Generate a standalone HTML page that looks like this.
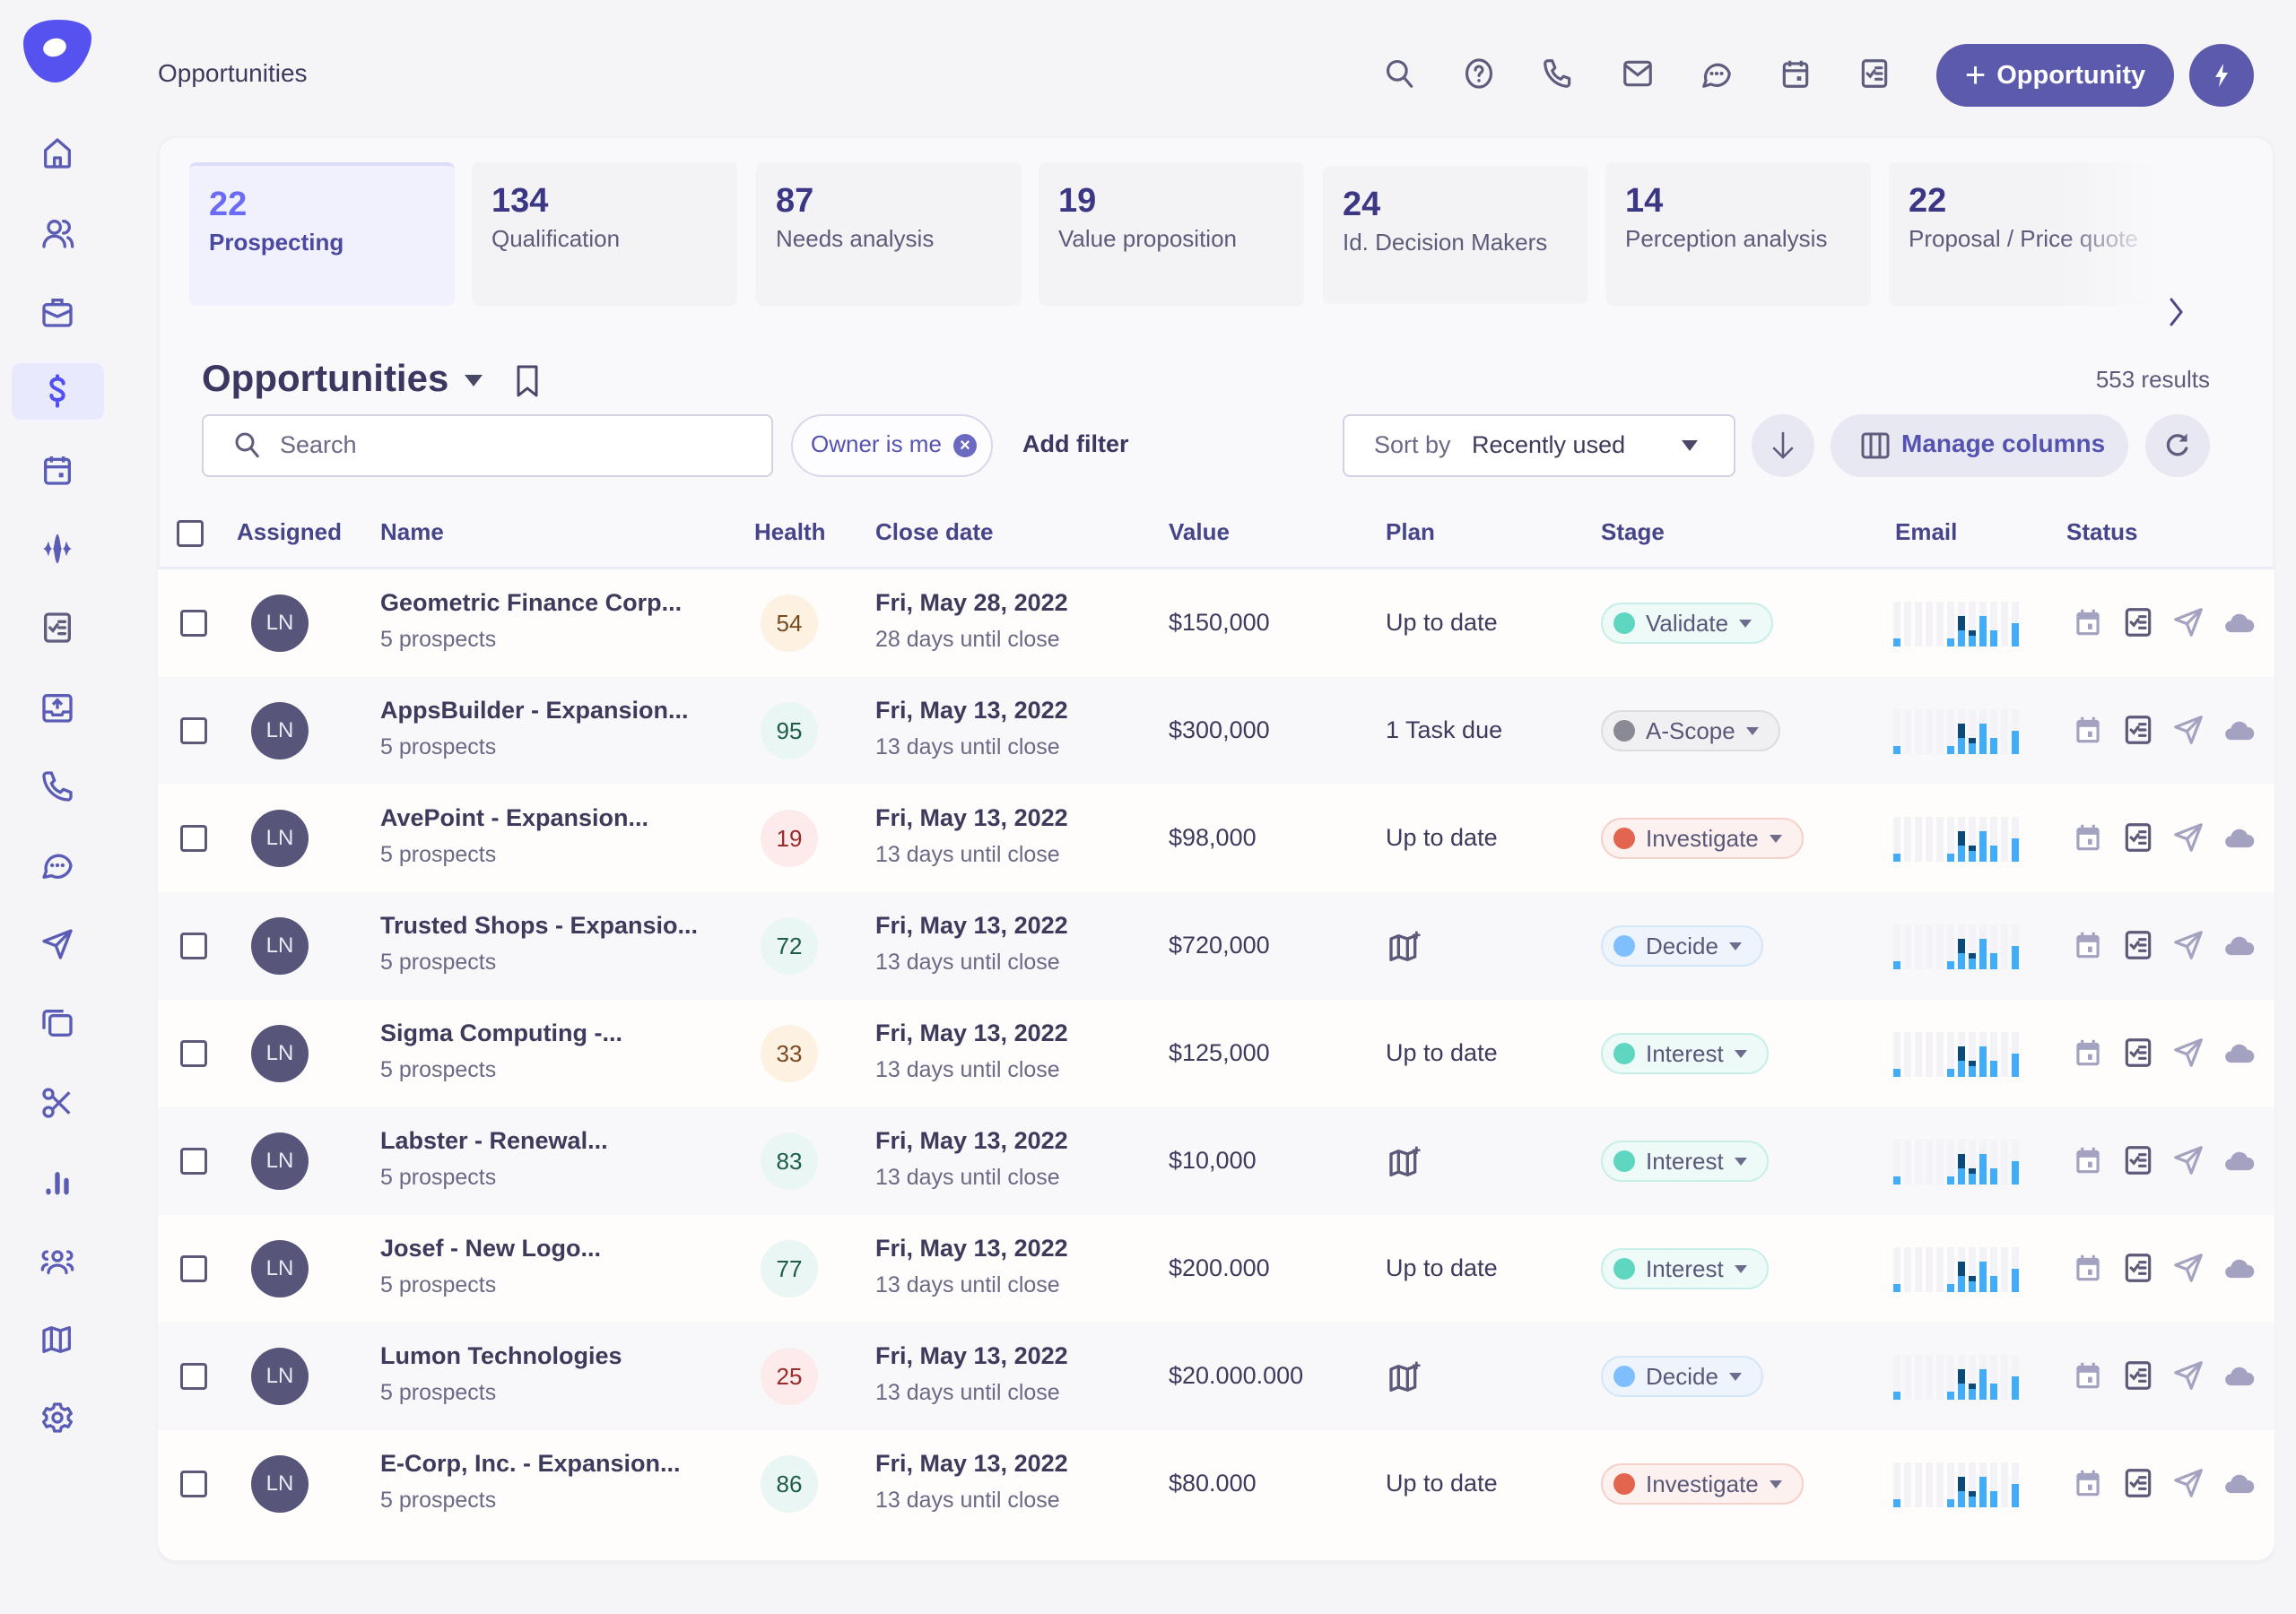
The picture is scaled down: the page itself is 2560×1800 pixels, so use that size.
<!DOCTYPE html>
<html><head><meta charset="utf-8">
<style>
*{box-sizing:border-box;margin:0;padding:0}
body{width:2560px;height:1800px;background:#f5f5f8;font-family:"Liberation Sans",sans-serif;color:#3d3a5c;position:relative;overflow:hidden}
.a{position:absolute}
.sb{position:absolute;left:44px;width:40px;height:40px}
.ti{position:absolute;top:63px;width:38px;height:38px}
.card{position:absolute;top:181px;width:296px;height:160px;background:#f3f3f6;border-radius:8px}
.card .n{position:absolute;left:22px;top:22px;font-size:38px;color:#3b3784;font-weight:600}
.card .l{position:absolute;left:22px;top:70px;font-size:26px;color:#5d5b7a}
.th{position:absolute;top:578px;font-size:26px;color:#47458a;font-weight:600}
.row{position:absolute;left:176px;width:2360px;height:120px}
.row .cb{position:absolute;left:25px;top:45px;width:30px;height:30px;border:3px solid #5c5a78;border-radius:4px;background:#fff}
.row .av{position:absolute;left:104px;top:28px;width:64px;height:64px;border-radius:50%;background:#57557a;color:#e8e8f2;font-size:24px;text-align:center;line-height:64px}
.row .t1{position:absolute;left:248px;top:22px;font-size:27px;font-weight:600;color:#3d3a5c}
.row .t2{position:absolute;left:248px;top:64px;font-size:25px;color:#6b6985}
.row .h{position:absolute;left:672px;top:28px;width:64px;height:64px;border-radius:50%;text-align:center;line-height:64px;font-size:26px}
.row .d1{position:absolute;left:800px;top:22px;font-size:27px;font-weight:600}
.row .d2{position:absolute;left:800px;top:64px;font-size:25px;color:#6b6985}
.row .v{position:absolute;left:1127px;top:44px;font-size:27px}
.row .p{position:absolute;left:1369px;top:44px;font-size:27px}
.row .pm{position:absolute;left:1370px;top:42px;width:40px;height:40px}
.pill{position:absolute;left:1609px;top:37px;height:46px;border-radius:23px;border:2px solid;display:flex;align-items:center;padding:0 22px 0 12px;font-size:26px;color:#5a5878}
.pill i{display:inline-block;width:24px;height:24px;border-radius:50%;margin-right:12px}
.pill b{display:inline-block;margin-left:12px;width:0;height:0;border-left:7px solid transparent;border-right:7px solid transparent;border-top:9px solid #6e6c8c}
.em{position:absolute;left:1935px;top:36px;width:145px;height:50px}
.st{position:absolute;top:40px;width:38px;height:38px}
.g{background:#e9f6f3;color:#1f5b4b}.o{background:#fdf1e1;color:#7a4a1f}.r{background:#fdeaea;color:#9a2b2b}
.pv{background:#eefaf8;border-color:#c7eee7}.pv i{background:#5ed6c0}
.pa{background:#f0f0f3;border-color:#dcdce1}.pa i{background:#8a8a95}
.pi{background:#fdf1ef;border-color:#f6d0c8}.pi i{background:#e4654f}
.pd{background:#eef4fc;border-color:#d3e6f8}.pd i{background:#80bfff}
</style></head><body>
<svg width="0" height="0" style="position:absolute">
<defs>
<symbol id="cal" viewBox="0 0 24 24"><rect x="4" y="5" width="16" height="16" rx="2" fill="none" stroke="currentColor" stroke-width="2"/><path d="M4 10h16M8 3v4M16 3v4" stroke="currentColor" stroke-width="2" fill="none"/><rect x="13" y="14" width="3" height="3" fill="currentColor"/></symbol>
<symbol id="calf" viewBox="0 0 24 24"><rect x="4" y="5" width="16" height="16" rx="2" fill="currentColor"/><path d="M8 3v4M16 3v4" stroke="currentColor" stroke-width="2"/><rect x="6" y="10" width="12" height="9" fill="#fff"/><rect x="12" y="13" width="3" height="4" fill="currentColor"/></symbol>
<symbol id="chk" viewBox="0 0 24 24"><rect x="4" y="3" width="16" height="18" rx="2" fill="none" stroke="currentColor" stroke-width="2"/><path d="M7 12l2 2 3-4M13 8h4M13 12h4M13 16h4" stroke="currentColor" stroke-width="2" fill="none" stroke-linecap="round"/></symbol>
<symbol id="send" viewBox="0 0 24 24"><path d="M21 3L3 10l8 3 3 8z M21 3L11 13" fill="none" stroke="currentColor" stroke-width="2" stroke-linejoin="round"/></symbol>
<symbol id="cloud" viewBox="0 0 24 24"><path d="M6 19a4 4 0 010-8 6 6 0 0111.5-1A4.5 4.5 0 0118 19z" fill="currentColor"/></symbol>
<symbol id="map" viewBox="0 0 24 24"><path d="M3 6l5-2 6 2 5-2v14l-5 2-6-2-5 2z M8 4v14 M14 6v14" fill="none" stroke="currentColor" stroke-width="2" stroke-linejoin="round"/><path d="M20 1v5M17.5 3.5h5" stroke="currentColor" stroke-width="1.6"/></symbol>
<symbol id="chart" viewBox="0 0 145 50">
<g fill="#f3f3f7"><rect x="0" y="0" width="8" height="50"/><rect x="12" y="0" width="8" height="50"/><rect x="24" y="0" width="8" height="50"/><rect x="36" y="0" width="8" height="50"/><rect x="48" y="0" width="8" height="50"/><rect x="60" y="0" width="8" height="50"/><rect x="72" y="0" width="8" height="50"/><rect x="84" y="0" width="8" height="50"/><rect x="96" y="0" width="8" height="50"/><rect x="108" y="0" width="8" height="50"/><rect x="120" y="0" width="8" height="50"/><rect x="132" y="0" width="8" height="50"/></g>
<g fill="#41acf7"><rect x="0" y="41" width="8" height="9"/><rect x="60" y="41" width="8" height="9"/><rect x="72" y="32" width="8" height="18"/><rect x="84" y="38" width="8" height="12"/><rect x="96" y="16" width="8" height="34"/><rect x="108" y="32" width="8" height="18"/><rect x="132" y="24" width="8" height="26"/></g>
<g fill="#0c4a7a"><rect x="72" y="16" width="8" height="16"/><rect x="84" y="32" width="8" height="6"/></g>
</symbol>
</defs></svg>

<!-- logo -->
<svg class="a" style="left:24px;top:20px" width="80" height="74" viewBox="0 0 80 74"><path d="M40 2C62 2 78 8 78 22c0 22-22 50-40 50C18 72 2 50 2 28 2 12 18 2 40 2z" fill="#5552f0"/><ellipse cx="37" cy="33" rx="13" ry="10" fill="#fff" transform="rotate(-15 37 33)"/></svg>

<!-- sidebar -->
<div class="a" style="left:11px;top:403px;width:107px;height:67px;border-radius:12px;background:#e9e9fd;border:2px solid #f4f4ff"></div>
<svg class="sb" style="top:151px;color:#5b5cb5" viewBox="0 0 24 24"><path d="M4 10l8-7 8 7v10a1 1 0 01-1 1H5a1 1 0 01-1-1z M10 21v-6h4v6" fill="none" stroke="currentColor" stroke-width="2" stroke-linejoin="round"/></svg>
<svg class="sb" style="top:240px;color:#5b5cb5" viewBox="0 0 24 24"><circle cx="10" cy="8" r="4" fill="none" stroke="currentColor" stroke-width="2"/><path d="M3 21c0-4 3-7 7-7s7 3 7 7M16 4a4 4 0 010 8M19 15c2 1 3 3 3 6" fill="none" stroke="currentColor" stroke-width="2" stroke-linecap="round"/></svg>
<svg class="sb" style="top:328px;color:#5b5cb5" viewBox="0 0 24 24"><rect x="3" y="7" width="18" height="14" rx="2" fill="none" stroke="currentColor" stroke-width="2"/><path d="M9 7V4h6v3M3 11l9 4 9-4" fill="none" stroke="currentColor" stroke-width="2"/></svg>
<svg class="sb" style="top:416px;color:#5050f5" viewBox="0 0 24 24"><path d="M16 7c0-2-2-3-4-3s-4 1-4 3 2 3 4 4 4 2 4 4-2 3-4 3-4-1-4-3M12 2v2M12 20v2" fill="none" stroke="currentColor" stroke-width="2.4" stroke-linecap="round"/></svg>
<svg class="sb" style="top:504px;color:#5b5cb5"><use href="#cal"/></svg>
<svg class="sb" style="top:592px;color:#5b5cb5" viewBox="0 0 24 24"><path d="M2 12c2 0 3-2 4-5 1 3 1 5 3 5 1 0 1-8 3-10 2 2 2 10 3 10 2 0 2-2 3-5 1 3 2 5 4 5-2 0-3 2-4 5-1-3-1-5-3-5-1 0-1 8-3 10-2-2-2-10-3-10-2 0-2 2-3 5-1-3-2-5-4-5z" fill="currentColor"/></svg>
<svg class="sb" style="top:680px;color:#5f5d7e"><use href="#chk"/></svg>
<svg class="sb" style="top:769px;color:#5b5cb5" viewBox="0 0 24 24"><rect x="3" y="4" width="18" height="17" rx="2" fill="none" stroke="currentColor" stroke-width="2"/><path d="M3 15h5l1 2h6l1-2h5M12 13V7M9 10l3-3 3 3" fill="none" stroke="currentColor" stroke-width="2"/></svg>
<svg class="sb" style="top:857px;color:#5b5cb5" viewBox="0 0 24 24"><path d="M5 3h3l2 5-2 2a11 11 0 006 6l2-2 5 2v3a2 2 0 01-2 2A17 17 0 013 5a2 2 0 012-2" fill="none" stroke="currentColor" stroke-width="2" stroke-linejoin="round"/></svg>
<svg class="sb" style="top:945px;color:#5b5cb5" viewBox="0 0 24 24"><path d="M3 20l1.5-4A8 8 0 1121 12a9 9 0 01-13 7z" fill="none" stroke="currentColor" stroke-width="2" stroke-linejoin="round"/><circle cx="8.5" cy="12" r="1.3" fill="currentColor"/><circle cx="12" cy="12" r="1.3" fill="currentColor"/><circle cx="15.5" cy="12" r="1.3" fill="currentColor"/></svg>
<svg class="sb" style="top:1033px;color:#5b5cb5"><use href="#send"/></svg>
<svg class="sb" style="top:1121px;color:#5b5cb5" viewBox="0 0 24 24"><rect x="7" y="7" width="14" height="13" rx="2" fill="none" stroke="currentColor" stroke-width="2"/><path d="M3 16V6a2 2 0 012-2h11" fill="none" stroke="currentColor" stroke-width="2"/></svg>
<svg class="sb" style="top:1210px;color:#5b5cb5" viewBox="0 0 24 24"><circle cx="6" cy="6" r="3" fill="none" stroke="currentColor" stroke-width="2"/><circle cx="6" cy="18" r="3" fill="none" stroke="currentColor" stroke-width="2"/><path d="M8.5 7.5L20 19M8.5 16.5L20 5" stroke="currentColor" stroke-width="2"/></svg>
<svg class="sb" style="top:1298px;color:#5b5cb5" viewBox="0 0 24 24"><path d="M6 19v-1M12 19V7M18 19v-8" stroke="currentColor" stroke-width="3.2" stroke-linecap="round"/></svg>
<svg class="sb" style="top:1386px;color:#5b5cb5" viewBox="0 0 24 24"><circle cx="12" cy="9" r="3" fill="none" stroke="currentColor" stroke-width="2"/><path d="M6 20c0-3 3-5 6-5s6 2 6 5M5 6a2.5 2.5 0 000 5M19 6a2.5 2.5 0 010 5M2 18c0-2 1-3 3-3.5M22 18c0-2-1-3-3-3.5" fill="none" stroke="currentColor" stroke-width="2" stroke-linecap="round"/></svg>
<svg class="sb" style="top:1474px;color:#5b5cb5" viewBox="0 0 24 24"><path d="M3 6l5-2 6 2 6-2v14l-6 2-6-2-5 2z M8 4v14 M14 6v14" fill="none" stroke="currentColor" stroke-width="2" stroke-linejoin="round"/></svg>
<svg class="sb" style="top:1561px;color:#5b5cb5" viewBox="0 0 24 24"><circle cx="12" cy="12" r="3" fill="none" stroke="currentColor" stroke-width="2"/><path d="M10 3h4l.6 2.5 2.2 1.2 2.4-.9 2 3.4-1.9 1.7v2.2l1.9 1.7-2 3.4-2.4-.9-2.2 1.2L14 21h-4l-.6-2.5-2.2-1.2-2.4.9-2-3.4 1.9-1.7v-2.2L2.8 9.2l2-3.4 2.4.9 2.2-1.2z" fill="none" stroke="currentColor" stroke-width="2" stroke-linejoin="round"/></svg>

<!-- top bar -->
<div class="a" style="left:176px;top:66px;font-size:28px;color:#3d3a5c">Opportunities</div>
<svg class="ti" style="left:1542px;color:#5f5d7e" viewBox="0 0 24 24"><circle cx="10" cy="10" r="6.5" fill="none" stroke="currentColor" stroke-width="2"/><path d="M15 15l5 6" stroke="currentColor" stroke-width="2" stroke-linecap="round"/></svg>
<svg class="ti" style="left:1630px;color:#5f5d7e" viewBox="0 0 24 24"><ellipse cx="12" cy="12" rx="8.5" ry="9.5" fill="none" stroke="currentColor" stroke-width="2"/><path d="M9.5 9.5a2.5 2.5 0 115 0c0 2-2.5 2-2.5 4" fill="none" stroke="currentColor" stroke-width="2" stroke-linecap="round"/><circle cx="12" cy="17" r="1.1" fill="currentColor"/></svg>
<svg class="ti" style="left:1718px;color:#5f5d7e" viewBox="0 0 24 24"><path d="M5 3h3l2 5-2 2a11 11 0 006 6l2-2 4 1.5v3.5a2 2 0 01-2 2A17 17 0 013 5a2 2 0 012-2" fill="none" stroke="currentColor" stroke-width="2" stroke-linejoin="round"/></svg>
<svg class="ti" style="left:1807px;color:#5f5d7e" viewBox="0 0 24 24"><rect x="3" y="4" width="18" height="16" rx="2" fill="none" stroke="currentColor" stroke-width="2"/><path d="M3 6l9 7 9-7" fill="none" stroke="currentColor" stroke-width="2"/></svg>
<svg class="ti" style="left:1895px;color:#5f5d7e" viewBox="0 0 24 24"><path d="M3 21l1.5-4A8.5 8.5 0 1121 12a9 9 0 01-13 7.5z" fill="none" stroke="currentColor" stroke-width="2" stroke-linejoin="round"/><circle cx="8.5" cy="12" r="1.3" fill="currentColor"/><circle cx="12" cy="12" r="1.3" fill="currentColor"/><circle cx="15.5" cy="12" r="1.3" fill="currentColor"/></svg>
<svg class="ti" style="left:1983px;color:#5f5d7e"><use href="#cal"/></svg>
<svg class="ti" style="left:2071px;color:#5f5d7e"><use href="#chk"/></svg>
<div class="a" style="left:2159px;top:49px;width:265px;height:70px;border-radius:35px;background:#5b5aad;color:#fff;font-size:29px;font-weight:600;display:flex;align-items:center;justify-content:center"><span style="font-size:40px;font-weight:300;margin-right:12px;line-height:1">+</span>Opportunity</div>
<div class="a" style="left:2441px;top:49px;width:72px;height:70px;border-radius:50%;background:#5b5aad"><svg style="position:absolute;left:24px;top:21px" width="24" height="28" viewBox="0 0 24 28"><path d="M14 1L5 16h6l-2 11 10-16h-6z" fill="#fff"/></svg></div>

<!-- main card -->
<div class="a" style="left:176px;top:152px;width:2360px;height:1590px;background:#f9f9fc;border-radius:20px;border:2px solid #efeff4;box-shadow:0 2px 4px rgba(0,0,0,.04)"></div>

<div class="card" style="left:211px;background:#f1f1fd;border-top:4px solid #dcdcfb"><div class="n" style="color:#6a6cf5">22</div><div class="l" style="color:#4a48a0;font-weight:600">Prospecting</div></div>
<div class="card" style="left:526px"><div class="n">134</div><div class="l">Qualification</div></div>
<div class="card" style="left:843px"><div class="n">87</div><div class="l">Needs analysis</div></div>
<div class="card" style="left:1158px"><div class="n">19</div><div class="l">Value proposition</div></div>
<div class="card" style="left:1475px;top:185px;height:154px"><div class="n">24</div><div class="l">Id. Decision Makers</div></div>
<div class="card" style="left:1790px"><div class="n">14</div><div class="l">Perception analysis</div></div>
<div class="card" style="left:2106px;width:420px;overflow:hidden"><div class="n">22</div><div class="l" style="white-space:nowrap">Proposal / Price quote</div><div style="position:absolute;left:190px;top:0;width:240px;height:160px;background:linear-gradient(90deg,rgba(249,249,252,0),#f9f9fc 45%)"></div></div>
<svg class="a" style="left:2416px;top:330px" width="22" height="36" viewBox="0 0 22 36"><path d="M5 4l11 14L5 32" fill="none" stroke="#4a4880" stroke-width="3" stroke-linecap="round"/></svg>

<div class="a" style="left:225px;top:398px;font-size:42px;font-weight:600;color:#3a3760">Opportunities</div>
<div class="a" style="left:518px;top:418px;border-left:10px solid transparent;border-right:10px solid transparent;border-top:13px solid #4a4868"></div>
<svg class="a" style="left:573px;top:406px" width="30" height="38" viewBox="0 0 30 38"><path d="M5 3h20v32l-10-8-10 8z" fill="none" stroke="#4a4868" stroke-width="3" stroke-linejoin="round"/></svg>
<div class="a" style="left:2320px;top:408px;width:144px;text-align:right;font-size:26px;color:#5d5b7a">553 results</div>

<div class="a" style="left:225px;top:462px;width:637px;height:70px;border:2px solid #d3d2e4;border-radius:8px;background:#fff"></div>
<svg class="a" style="left:258px;top:478px" width="36" height="36" viewBox="0 0 24 24"><circle cx="10" cy="10" r="6" fill="none" stroke="#5f5d7e" stroke-width="2"/><path d="M14.5 14.5l5 6" stroke="#5f5d7e" stroke-width="2" stroke-linecap="round"/></svg>
<div class="a" style="left:312px;top:481px;font-size:27px;color:#6b6985">Search</div>
<div class="a" style="left:882px;top:462px;width:225px;height:70px;border:2px solid #d8d8ea;border-radius:35px;background:#fdfdff"></div>
<div class="a" style="left:904px;top:480px;font-size:26px;color:#5553b0">Owner is me</div>
<div class="a" style="left:1063px;top:484px;width:26px;height:26px;border-radius:50%;background:#6b69c0;color:#fff;font-size:20px;line-height:26px;text-align:center;font-weight:700">×</div>
<div class="a" style="left:1140px;top:480px;font-size:27px;font-weight:600;color:#3a3760">Add filter</div>

<div class="a" style="left:1497px;top:462px;width:438px;height:70px;border:2px solid #d3d2e4;border-radius:8px;background:#fff"></div>
<div class="a" style="left:1532px;top:481px;font-size:27px;color:#6b6985">Sort by</div>
<div class="a" style="left:1641px;top:481px;font-size:27px;color:#3d3a5c">Recently used</div>
<div class="a" style="left:1875px;top:491px;border-left:9px solid transparent;border-right:9px solid transparent;border-top:12px solid #4a4868"></div>
<div class="a" style="left:1953px;top:462px;width:70px;height:70px;border-radius:50%;background:#e7e8f2"></div>
<svg class="a" style="left:1973px;top:480px" width="30" height="34" viewBox="0 0 30 34"><path d="M15 3v27M5 20l10 10 10-10" fill="none" stroke="#5f5d7e" stroke-width="2.6" stroke-linecap="round"/></svg>
<div class="a" style="left:2041px;top:462px;width:332px;height:70px;border-radius:35px;background:#e7e8f2"></div>
<svg class="a" style="left:2075px;top:482px" width="32" height="30" viewBox="0 0 32 30"><rect x="2" y="2" width="28" height="26" rx="3" fill="none" stroke="#5f5d7e" stroke-width="3"/><path d="M11 2v26M21 2v26" stroke="#5f5d7e" stroke-width="3"/></svg>
<div class="a" style="left:2120px;top:479px;font-size:28px;font-weight:600;color:#5553b0">Manage columns</div>
<div class="a" style="left:2392px;top:462px;width:72px;height:70px;border-radius:50%;background:#e7e8f2"></div>
<svg class="a" style="left:2410px;top:479px" width="36" height="36" viewBox="0 0 24 24"><path d="M18 8a7 7 0 10.5 6" fill="none" stroke="#5f5d7e" stroke-width="2.2" stroke-linecap="round"/><path d="M19 3v6h-6z" fill="#5f5d7e"/></svg>

<!-- header -->
<div class="a" style="left:197px;top:580px;width:30px;height:30px;border:3px solid #5c5a78;border-radius:4px;background:#fff"></div>
<div class="th" style="left:264px">Assigned</div>
<div class="th" style="left:424px">Name</div>
<div class="th" style="left:841px">Health</div>
<div class="th" style="left:976px">Close date</div>
<div class="th" style="left:1303px">Value</div>
<div class="th" style="left:1545px">Plan</div>
<div class="th" style="left:1785px">Stage</div>
<div class="th" style="left:2113px">Email</div>
<div class="th" style="left:2304px">Status</div>
<div class="a" style="left:178px;top:632px;width:2356px;height:3px;background:#ececf4"></div>

<!-- rows -->
<div class="row" style="top:635px;background:#fffdfb">
<div class="cb"></div><div class="av">LN</div><div class="t1">Geometric Finance Corp...</div><div class="t2">5 prospects</div><div class="h o">54</div><div class="d1">Fri, May 28, 2022</div><div class="d2">28 days until close</div><div class="v">$150,000</div><div class="p">Up to date</div>
<div class="pill pv"><i></i>Validate<b></b></div><svg class="em"><use href="#chart"/></svg>
<svg class="st" style="left:2133px;color:#a3a2c0"><use href="#calf"/></svg><svg class="st" style="left:2189px;color:#5c5a78"><use href="#chk"/></svg><svg class="st" style="left:2245px;color:#a3a2c0"><use href="#send"/></svg><svg class="st" style="left:2300px;width:42px;color:#a3a2c0"><use href="#cloud"/></svg></div>

<div class="row" style="top:755px;background:#f8f8fb">
<div class="cb"></div><div class="av">LN</div><div class="t1">AppsBuilder - Expansion...</div><div class="t2">5 prospects</div><div class="h g">95</div><div class="d1">Fri, May 13, 2022</div><div class="d2">13 days until close</div><div class="v">$300,000</div><div class="p">1 Task due</div>
<div class="pill pa"><i></i>A-Scope<b></b></div><svg class="em"><use href="#chart"/></svg>
<svg class="st" style="left:2133px;color:#a3a2c0"><use href="#calf"/></svg><svg class="st" style="left:2189px;color:#5c5a78"><use href="#chk"/></svg><svg class="st" style="left:2245px;color:#a3a2c0"><use href="#send"/></svg><svg class="st" style="left:2300px;width:42px;color:#a3a2c0"><use href="#cloud"/></svg></div>

<div class="row" style="top:875px;background:#fffdfb">
<div class="cb"></div><div class="av">LN</div><div class="t1">AvePoint - Expansion...</div><div class="t2">5 prospects</div><div class="h r">19</div><div class="d1">Fri, May 13, 2022</div><div class="d2">13 days until close</div><div class="v">$98,000</div><div class="p">Up to date</div>
<div class="pill pi"><i></i>Investigate<b></b></div><svg class="em"><use href="#chart"/></svg>
<svg class="st" style="left:2133px;color:#a3a2c0"><use href="#calf"/></svg><svg class="st" style="left:2189px;color:#5c5a78"><use href="#chk"/></svg><svg class="st" style="left:2245px;color:#a3a2c0"><use href="#send"/></svg><svg class="st" style="left:2300px;width:42px;color:#a3a2c0"><use href="#cloud"/></svg></div>

<div class="row" style="top:995px;background:#f8f8fb">
<div class="cb"></div><div class="av">LN</div><div class="t1">Trusted Shops - Expansio...</div><div class="t2">5 prospects</div><div class="h g">72</div><div class="d1">Fri, May 13, 2022</div><div class="d2">13 days until close</div><div class="v">$720,000</div><svg class="pm" style="color:#5c5a78"><use href="#map"/></svg>
<div class="pill pd"><i></i>Decide<b></b></div><svg class="em"><use href="#chart"/></svg>
<svg class="st" style="left:2133px;color:#a3a2c0"><use href="#calf"/></svg><svg class="st" style="left:2189px;color:#5c5a78"><use href="#chk"/></svg><svg class="st" style="left:2245px;color:#a3a2c0"><use href="#send"/></svg><svg class="st" style="left:2300px;width:42px;color:#a3a2c0"><use href="#cloud"/></svg></div>

<div class="row" style="top:1115px;background:#fffdfb">
<div class="cb"></div><div class="av">LN</div><div class="t1">Sigma Computing -...</div><div class="t2">5 prospects</div><div class="h o">33</div><div class="d1">Fri, May 13, 2022</div><div class="d2">13 days until close</div><div class="v">$125,000</div><div class="p">Up to date</div>
<div class="pill pv"><i></i>Interest<b></b></div><svg class="em"><use href="#chart"/></svg>
<svg class="st" style="left:2133px;color:#a3a2c0"><use href="#calf"/></svg><svg class="st" style="left:2189px;color:#5c5a78"><use href="#chk"/></svg><svg class="st" style="left:2245px;color:#a3a2c0"><use href="#send"/></svg><svg class="st" style="left:2300px;width:42px;color:#a3a2c0"><use href="#cloud"/></svg></div>

<div class="row" style="top:1235px;background:#f8f8fb">
<div class="cb"></div><div class="av">LN</div><div class="t1">Labster - Renewal...</div><div class="t2">5 prospects</div><div class="h g">83</div><div class="d1">Fri, May 13, 2022</div><div class="d2">13 days until close</div><div class="v">$10,000</div><svg class="pm" style="color:#5c5a78"><use href="#map"/></svg>
<div class="pill pv"><i></i>Interest<b></b></div><svg class="em"><use href="#chart"/></svg>
<svg class="st" style="left:2133px;color:#a3a2c0"><use href="#calf"/></svg><svg class="st" style="left:2189px;color:#5c5a78"><use href="#chk"/></svg><svg class="st" style="left:2245px;color:#a3a2c0"><use href="#send"/></svg><svg class="st" style="left:2300px;width:42px;color:#a3a2c0"><use href="#cloud"/></svg></div>

<div class="row" style="top:1355px;background:#fffdfb">
<div class="cb"></div><div class="av">LN</div><div class="t1">Josef - New Logo...</div><div class="t2">5 prospects</div><div class="h g">77</div><div class="d1">Fri, May 13, 2022</div><div class="d2">13 days until close</div><div class="v">$200.000</div><div class="p">Up to date</div>
<div class="pill pv"><i></i>Interest<b></b></div><svg class="em"><use href="#chart"/></svg>
<svg class="st" style="left:2133px;color:#a3a2c0"><use href="#calf"/></svg><svg class="st" style="left:2189px;color:#5c5a78"><use href="#chk"/></svg><svg class="st" style="left:2245px;color:#a3a2c0"><use href="#send"/></svg><svg class="st" style="left:2300px;width:42px;color:#a3a2c0"><use href="#cloud"/></svg></div>

<div class="row" style="top:1475px;background:#f8f8fb">
<div class="cb"></div><div class="av">LN</div><div class="t1">Lumon Technologies</div><div class="t2">5 prospects</div><div class="h r">25</div><div class="d1">Fri, May 13, 2022</div><div class="d2">13 days until close</div><div class="v">$20.000.000</div><svg class="pm" style="color:#5c5a78"><use href="#map"/></svg>
<div class="pill pd"><i></i>Decide<b></b></div><svg class="em"><use href="#chart"/></svg>
<svg class="st" style="left:2133px;color:#a3a2c0"><use href="#calf"/></svg><svg class="st" style="left:2189px;color:#5c5a78"><use href="#chk"/></svg><svg class="st" style="left:2245px;color:#a3a2c0"><use href="#send"/></svg><svg class="st" style="left:2300px;width:42px;color:#a3a2c0"><use href="#cloud"/></svg></div>

<div class="row" style="top:1595px;background:#fffdfb;height:145px;border-radius:0 0 20px 20px">
<div class="cb"></div><div class="av">LN</div><div class="t1">E-Corp, Inc. - Expansion...</div><div class="t2">5 prospects</div><div class="h g">86</div><div class="d1">Fri, May 13, 2022</div><div class="d2">13 days until close</div><div class="v">$80.000</div><div class="p">Up to date</div>
<div class="pill pi"><i></i>Investigate<b></b></div><svg class="em"><use href="#chart"/></svg>
<svg class="st" style="left:2133px;color:#a3a2c0"><use href="#calf"/></svg><svg class="st" style="left:2189px;color:#5c5a78"><use href="#chk"/></svg><svg class="st" style="left:2245px;color:#a3a2c0"><use href="#send"/></svg><svg class="st" style="left:2300px;width:42px;color:#a3a2c0"><use href="#cloud"/></svg></div>

</body></html>
